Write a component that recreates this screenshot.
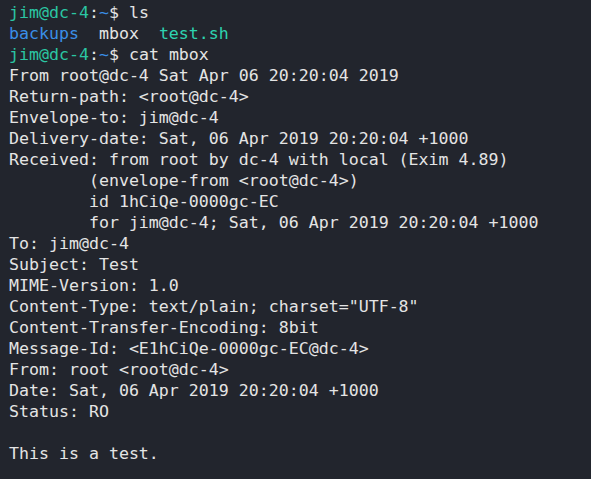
const lines = [
  "From root@dc-4 Sat Apr 06 20:20:04 2019",
  "Return-path: <root@dc-4>",
  "Envelope-to: jim@dc-4",
  "Delivery-date: Sat, 06 Apr 2019 20:20:04 +1000",
  "Received: from root by dc-4 with local (Exim 4.89)",
  "        (envelope-from <root@dc-4>)",
  "        id 1hCiQe-0000gc-EC",
  "        for jim@dc-4; Sat, 06 Apr 2019 20:20:04 +1000",
  "To: jim@dc-4",
  "Subject: Test",
  "MIME-Version: 1.0",
  'Content-Type: text/plain; charset="UTF-8"',
  "Content-Transfer-Encoding: 8bit",
  "Message-Id: <E1hCiQe-0000gc-EC@dc-4>",
  "From: root <root@dc-4>",
  "Date: Sat, 06 Apr 2019 20:20:04 +1000",
  "Status: RO",
  "",
  "This is a test.",
];

const Prompt = ({ cmd }: { cmd: string }) => (
  <div>
    <span className="text-[#2bc6a3]">jim@dc-4</span>
    <span>:</span>
    <span className="text-[#3a8fe8]">~</span>
    <span>$ {cmd}</span>
  </div>
);

export default function App() {
  return (
    <div className="w-[591px] h-[479px] overflow-hidden bg-[#22252d] text-[#e4e4e4] font-['DejaVu_Sans_Mono',monospace] text-[16.6px] leading-[21px] whitespace-pre pl-[9px] pt-[2px]">
      <Prompt cmd="ls" />
      <div>
        <span className="text-[#3a8fe8]">backups</span>
        <span>  mbox  </span>
        <span className="text-[#2ed3b0]">test.sh</span>
      </div>
      <Prompt cmd="cat mbox" />
      {lines.map((l, i) => (
        <div key={i} className="h-[21px]">
          {l}
        </div>
      ))}
    </div>
  );
}
